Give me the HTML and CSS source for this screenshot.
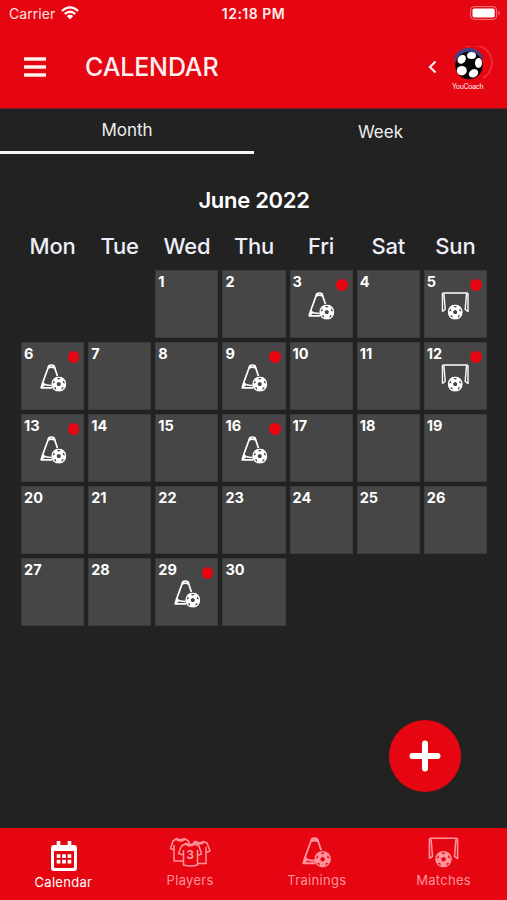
FILE: index.html
```html
<!DOCTYPE html>
<html lang="en">
<head>
<meta charset="utf-8">
<title>Calendar</title>
<link rel="stylesheet" href="styles.css">
</head>
<body>
<svg class="defs" width="0" height="0" aria-hidden="true">
  <symbol id="ball" viewBox="0 0 16 16">
    <circle cx="8" cy="8" r="7.800" fill="currentColor"/>
    <g class="spots"><path d="M8 5.600l2.300 1.700-.9 2.700H6.600l-.9-2.700z"/><path d="M6 1.600h4L8 3.500zM13 4l1.500 3.500-2.400-1zM13.400 11.700l-2.700 2.400.4-2.700zM2.600 11.700l2.700 2.400-.4-2.700zM3 4L1.500 7.500l2.400-1z"/></g>
  </symbol>
  <symbol id="cone" viewBox="0 0 28 30">
    <path d="M9 4.500Q9.200 2 12.200 2T15.400 4.500L18.200 13M9 4.500L3.200 20.500 2 24.800H13M9 5Q12.200 3.200 15.400 5M3.600 19Q4 22.500 12.500 22.500M2.300 24L6.200 21" fill="none" stroke="currentColor" stroke-width="1.700" stroke-linejoin="round"/>
    <use href="#ball" x="11.900" y="13.400" width="15.400" height="15.400"/>
  </symbol>
  <symbol id="goal" viewBox="0 0 28 30">
    <path d="M1.200 20.500V3Q1.200 2 2.200 2H25.800Q26.800 2 26.800 3V20.500L24 18.500 25.300 3M1.200 20.500L4 18.500 2.700 3" fill="none" stroke="currentColor" stroke-width="1.400" stroke-linejoin="round"/>
    <use href="#ball" x="6.300" y="13.400" width="15.400" height="15.400"/>
  </symbol>
</svg>

<header class="header">
  <div class="status">
    <div class="carrier">Carrier
      <svg width="18" height="14" viewBox="0 0 18 14"><g fill="none" stroke="currentColor" stroke-width="2.300"><path d="M.9 5Q9-2.300 17.100 5"/><path d="M3.700 8Q9 3.400 14.300 8"/></g><path d="M5.800 10.100Q9 7.600 12.200 10.100L9 13.600z" fill="currentColor"/></svg>
    </div>
    <div class="clock">12:18 PM</div>
    <div class="power"><svg width="31" height="14" viewBox="0 0 31 14"><rect x=".6" y=".6" width="26" height="12.800" rx="3.500" fill="none" stroke="#f47b80" stroke-width="1"/><rect x="2.500" y="2.500" width="22.200" height="9" rx="1.800" fill="#fff"/><path d="M28.500 4.500Q31 7 28.500 9.500z" fill="#f47b80"/></svg></div>
  </div>
  <div class="toolbar">
    <svg class="menu" width="22" height="20" viewBox="0 0 22 20"><path d="M0 2H22M0 10H22M0 18H22" stroke="currentColor" stroke-width="3.400"/></svg>
    <h1>CALENDAR</h1>
    <svg class="back" width="9" height="14" viewBox="0 0 9 14"><path d="M7.500 1.500L2 7l5.500 5.500" fill="none" stroke="currentColor" stroke-width="2.200"/></svg>
    <div class="logo">
      <svg width="40" height="37" viewBox="0 0 40 37">
        <path d="M13 1.500A17 17 0 0 1 30 32" fill="none" stroke="#ee2932" stroke-width="2"/>
        <path d="M0 16C3-2 26-3 32 15C25 5 8 5 0 16z" fill="#3d4588"/>
        <circle cx="16" cy="19.500" r="13.700" fill="#050505"/>
        <g fill="#fff"><ellipse cx="18.500" cy="9.500" rx="4.500" ry="3.500"/><ellipse cx="8.700" cy="13.300" rx="3.800" ry="4.800" transform="rotate(38 8.700 13.300)"/><ellipse cx="8.800" cy="24.700" rx="5" ry="4.800"/><ellipse cx="20.500" cy="27.300" rx="4.900" ry="3.900" transform="rotate(-30 20.500 27.300)"/><ellipse cx="25.500" cy="17" rx="3.500" ry="5"/></g>
      </svg>
      <span>YouCoach</span>
    </div>
  </div>
</header>

<nav class="tabs"><a class="active">Month</a><a>Week</a></nav>

<main>
  <h2>June 2022</h2>
  <div class="weekdays"><span>Mon</span><span>Tue</span><span>Wed</span><span>Thu</span><span>Fri</span><span>Sat</span><span>Sun</span></div>
  <div class="days">
    <div class="day first">1</div><div class="day">2</div>
    <div class="day event">3<svg><use href="#cone"/></svg></div>
    <div class="day">4</div>
    <div class="day event">5<svg><use href="#goal"/></svg></div>
    <div class="day event">6<svg><use href="#cone"/></svg></div>
    <div class="day">7</div><div class="day">8</div>
    <div class="day event">9<svg><use href="#cone"/></svg></div>
    <div class="day">10</div><div class="day">11</div>
    <div class="day event">12<svg><use href="#goal"/></svg></div>
    <div class="day event">13<svg><use href="#cone"/></svg></div>
    <div class="day">14</div><div class="day">15</div>
    <div class="day event">16<svg><use href="#cone"/></svg></div>
    <div class="day">17</div><div class="day">18</div><div class="day">19</div>
    <div class="day">20</div><div class="day">21</div><div class="day">22</div><div class="day">23</div><div class="day">24</div><div class="day">25</div><div class="day">26</div>
    <div class="day">27</div><div class="day">28</div>
    <div class="day event">29<svg><use href="#cone"/></svg></div>
    <div class="day">30</div>
  </div>
</main>

<button class="add" aria-label="Add"><svg width="32" height="32" viewBox="0 0 32 32"><path d="M16 3.500V28.500M3.500 16H28.500" stroke="#fff" stroke-width="6" stroke-linecap="round"/></svg></button>

<footer class="bottom">
  <a class="active">
    <svg width="26" height="30" viewBox="0 0 26 30"><path d="M3 4H23Q26 4 26 7V27Q26 30 23 30H3Q0 30 0 27V7Q0 4 3 4zM3 10V25.500Q3 27 4.500 27H21.500Q23 27 23 25.500V10z" fill="currentColor" fill-rule="evenodd"/><path d="M7.500 0V6M18.500 0V6" stroke="currentColor" stroke-width="3.600"/><path d="M5.700 15.200H20.300M5.700 20.700H20.300" stroke="currentColor" stroke-width="3.700" stroke-dasharray="3.700 1.750"/></svg>
    <span>Calendar</span>
  </a>
  <a>
    <svg width="42" height="30" viewBox="0 0 42 30">
      <g fill="#e60612" stroke="currentColor" stroke-width="1.500" stroke-linejoin="round">
        <path d="M8 1.500Q11.500 4 15 1.500L19.500 4 22 12.500 18 14V24H5V13L1.500 11.500 4 4z"/>
        <path d="M27 4.500Q30.500 7 34 4.500L38 6 41 14 37 15.500V26.500H25V5z"/>
        <path d="M6.500 2Q11.500 6 16.500 2M25.500 5Q30.500 9 35.500 5M5 13V8M37 15V10" fill="none"/>
        <path d="M17 6.500Q21 9 25 6.500L30 9 32.500 17 28.500 18.500V28Q21 30 14.500 28V18L9.500 16.500 12.500 9z"/>
        <path d="M15.500 7Q21 11 26.500 7M14.500 18V13M28.500 18V13" fill="none"/>
      </g>
      <text x="21.300" y="22.300" text-anchor="middle" class="number">3</text>
    </svg>
    <span>Players</span>
  </a>
  <a><svg class="sport" width="31" height="33"><use href="#cone"/></svg><span>Trainings</span></a>
  <a><svg class="sport" width="31" height="33"><use href="#goal"/></svg><span>Matches</span></a>
</footer>
</body>
</html>
```
FILE: styles.css
```css
* { box-sizing: border-box; }
body {
  --red: #e60612;
  --spot: #464646;
  margin: 0;
  height: 900px;
  display: flex;
  flex-direction: column;
  overflow: hidden;
  position: relative;
  background: #222;
  color: #fff;
  font-family: Inter, "Liberation Sans", sans-serif;
}
svg { display: block; flex: none; }
.defs { position: absolute; }
.spots { fill: var(--spot); }
.header { height: 109px; flex: none; background: var(--red); border-bottom: 1px solid #751a1e; }
.status {
  height: 27px;
  display: grid;
  grid-template-columns: 1fr auto 1fr;
  align-items: center;
  padding: 0 6px 0 9px;
  font-size: 14px;
  line-height: 27px;
}
.carrier { display: flex; align-items: center; gap: 6px; color: #ffe1e1; letter-spacing: .05px; }
.carrier svg { color: #fff; margin-top: -1px; }
.clock { font-weight: 600; color: #ffeded; letter-spacing: .5px; margin-left: -3px; }
.power { justify-self: end; margin-top: -1px; }
.toolbar { height: 80px; display: flex; align-items: center; padding: 0 14px 0 24px; color: #fff0f0; }
.menu { margin-right: 39px; }
h1 { margin: 0; flex: 1; font-size: 25px; font-weight: 500; letter-spacing: -.15px; }
.back { margin-right: 16px; }
.logo { width: 40px; padding-top: 2px; }
.logo span { display: block; margin-left: -1px; font-size: 7px; line-height: 7px; letter-spacing: -.35px; }
.tabs { height: 45px; flex: none; display: grid; grid-template-columns: 254px 1fr; text-align: center; font-size: 17px; line-height: 46px; color: #eee; }
.tabs a { height: 45px; }
.tabs .active { border-bottom: 3px solid #f5f5f5; line-height: 43px; }
main { flex: 1; padding: 31px 20px 0 21px; }
h2 { margin: 0; font-size: 22px; line-height: 30px; font-weight: 600; letter-spacing: -.3px; text-align: center; }
.weekdays { display: grid; grid-template-columns: repeat(7, 1fr); gap: 4px; height: 55px; padding-top: 16px; font-size: 22px; line-height: 30px; font-weight: 500; letter-spacing: -.2px; text-align: center; color: #eeeef8; }
.days { display: grid; grid-template-columns: repeat(7, 1fr); grid-auto-rows: 68px; gap: 4px; }
.day { position: relative; background: #464646; border: 1px solid #3c3c3c; padding: 2px 0 0 2px; font-size: 14.5px; line-height: 18px; font-weight: 700; }
.first { grid-column: 3; }
.day svg { width: 28px; height: 30px; margin: 0 auto; transform: translateX(-.8px); }
.event::after { content: ""; position: absolute; top: 8px; right: 4px; width: 11.500px; height: 11.500px; border-radius: 50%; background: var(--red); }
.add { position: absolute; left: 389px; top: 720px; width: 72px; height: 72px; border: 0; border-radius: 50%; padding: 0; display: grid; place-items: center; background: var(--red); }
.bottom { --spot: var(--red); height: 72px; flex: none; display: grid; grid-template-columns: repeat(4, 1fr); background: var(--red); color: #ff929b; font-size: 13px; letter-spacing: .3px; }
.bottom a { display: flex; flex-direction: column; align-items: center; padding-top: 9px; }
.bottom span { line-height: 18px; margin-top: 4px; }
.bottom .active { color: #fff; padding-top: 13px; }
.bottom .active svg { margin-left: 1px; }
.bottom .active span { margin-top: 2px; }
.bottom .sport { margin-top: -1px; }
.bottom .sport + span { margin-top: 2px; }
.number { font-size: 12px; font-weight: 700; fill: currentColor; }
```
